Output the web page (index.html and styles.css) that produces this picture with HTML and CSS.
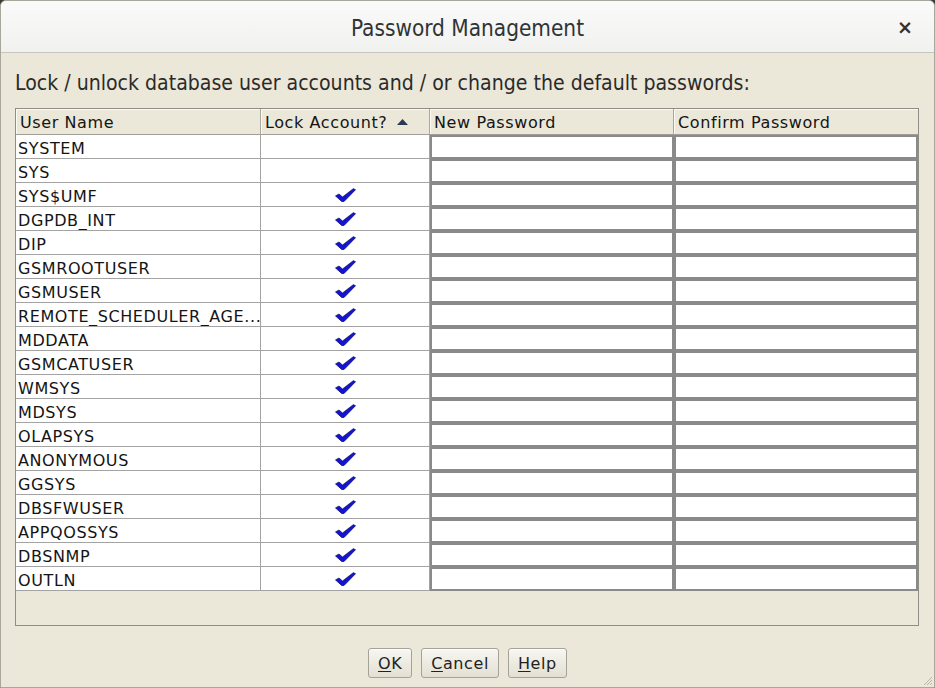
FILE: index.html
```html
<!DOCTYPE html>
<html>
<head>
<meta charset="utf-8">
<title>Password Management</title>
<link rel="stylesheet" href="styles.css">
</head>
<body>
<div class="window">
  <header class="titlebar">
    <span></span>
    <h1 class="title">Password Management</h1>
    <span class="close">×</span>
  </header>
  <main class="content">
    <p class="intro">Lock / unlock database user accounts and / or change the default passwords:</p>
    <div class="table">
      <div class="grid" id="grid">
        <div class="th">User Name</div>
        <div class="th">Lock Account? <svg class="sort" width="11" height="6" viewBox="0 0 11 6"><path d="M0 6 L5.5 0 L11 6 Z" fill="#2b3a55"/></svg></div>
        <div class="th">New Password</div>
        <div class="th last">Confirm Password</div>
      </div>
      <div class="filler"></div>
    </div>
    <div class="buttons">
      <button class="btn btn-ok"><span class="mn">O</span>K</button>
      <button class="btn"><span class="mn">C</span>ancel</button>
      <button class="btn"><span class="mn">H</span>elp</button>
    </div>
  </main>
  <svg class="grip" width="12" height="12" viewBox="0 0 12 12"><path d="M11 3 L3 11 M11 6 L6 11 M11 9 L9 11" stroke="#b9b6a8" stroke-width="1"/></svg>
</div>
<script src="app.js"></script>
</body>
</html>
```
FILE: app.js
```js
const users = [
  ["SYSTEM", false], ["SYS", false], ["SYS$UMF", true], ["DGPDB_INT", true],
  ["DIP", true], ["GSMROOTUSER", true], ["GSMUSER", true],
  ["REMOTE_SCHEDULER_AGE...", true], ["MDDATA", true], ["GSMCATUSER", true],
  ["WMSYS", true], ["MDSYS", true], ["OLAPSYS", true], ["ANONYMOUS", true],
  ["GGSYS", true], ["DBSFWUSER", true], ["APPQOSSYS", true], ["DBSNMP", true],
  ["OUTLN", true]
];
const tick = '<svg class="tick" width="21" height="14" viewBox="0 0 20 13"><path d="M0.5 7.4 L3.8 5.6 L7.2 8.4 L17.4 0.5 L19.6 1.4 L8.6 12.7 L6.4 12.7 Z" fill="#1414d6" stroke="#0b0b70" stroke-width="0.7" stroke-linejoin="round"/></svg>';
const grid = document.getElementById("grid");
let html = "";
for (const [name, locked] of users) {
  html += '<div class="td name">' + name + '</div>';
  html += '<div class="td lock">' + (locked ? tick : "") + '</div>';
  html += '<div class="pw"></div>';
  html += '<div class="pw"></div>';
}
grid.insertAdjacentHTML("beforeend", html);
```
FILE: styles.css
```css
* { box-sizing: border-box; }
html, body {
  margin: 0;
  padding: 0;
  background: #3a3a3a;
}
.window {
  position: relative;
  width: 935px;
  height: 688px;
  background: #ebe8d9;
  border: 1px solid #a9a79c;
  border-radius: 6px 6px 0 0;
  overflow: hidden;
  display: flex;
  flex-direction: column;
}
.titlebar {
  height: 52px;
  flex: none;
  display: grid;
  grid-template-columns: 1fr auto 1fr;
  align-items: center;
  background: linear-gradient(#fafafa, #f1f1f0);
  border-bottom: 1px solid #c6c5bd;
}
.title {
  margin: 0;
  font-family: "DejaVu Sans Condensed", "DejaVu Sans", sans-serif;
  font-stretch: condensed;
  font-weight: normal;
  font-size: 22.4px;
  color: #2e3436;
  padding-top: 2px;
}
.close {
  justify-self: end;
  margin-right: 21px;
  font-family: "DejaVu Sans", sans-serif;
  font-weight: bold;
  font-size: 19px;
  color: #2e3436;
}
.content {
  flex: 1;
  padding: 0 0 0 14px;
  display: flex;
  flex-direction: column;
}
.intro {
  margin: 18px 0 13px 0;
  height: 24px;
  line-height: 24px;
  font-family: "DejaVu Sans Condensed", "DejaVu Sans", sans-serif;
  font-stretch: condensed;
  font-size: 21.1px;
  color: #2b2b2b;
  white-space: nowrap;
}
.table {
  width: 904px;
  height: 518px;
  border: 1px solid #8e8d86;
  display: flex;
  flex-direction: column;
  font-family: "DejaVu Sans", sans-serif;
  font-size: 16px;
  letter-spacing: 0.6px;
  color: #141414;
}
.grid {
  display: grid;
  grid-template-columns: 245px 169px 244px 244px;
  grid-template-rows: 26px;
  grid-auto-rows: 24px;
}
.th {
  height: 26px;
  background: #ebe8d9;
  border-right: 1px solid #a9a79e;
  border-bottom: 1px solid #a09e96;
  box-shadow: inset 1px 1px 0 #fbfaf5;
  padding: 2px 0 0 4px;
  white-space: nowrap;
  display: flex;
  align-items: center;
}
.th.last { border-right: none; }
.sort { margin-left: 10px; margin-top: -2px; }
.td {
  background: #fff;
  border-right: 1px solid #a3a3a3;
  border-bottom: 1px solid #a3a3a3;
  white-space: nowrap;
  overflow: hidden;
}
.name {
  padding: 4px 0 0 2px;
}
.lock {
  display: flex;
  justify-content: center;
  align-items: center;
}
.pw {
  background: #fff;
  border: 2px solid #8a8a8a;
}
.filler { flex: 1; }
.buttons {
  display: flex;
  justify-content: center;
  gap: 9px;
  margin-top: 22px;
  padding-right: 14px;
}
.btn {
  height: 30px;
  padding: 0 9px;
  border: 1px solid #a4a299;
  border-radius: 3px;
  background: linear-gradient(#f7f6f1, #e3e0d2);
  box-shadow: inset 0 1px 0 #fff;
  font-family: "DejaVu Sans", sans-serif;
  font-size: 16px;
  letter-spacing: 0.6px;
  color: #222;
}
.btn-ok { width: 44px; padding: 0; }
.mn { text-decoration: underline; text-underline-offset: 2px; }
.grip {
  position: absolute;
  right: 1px;
  bottom: 1px;
}
```
